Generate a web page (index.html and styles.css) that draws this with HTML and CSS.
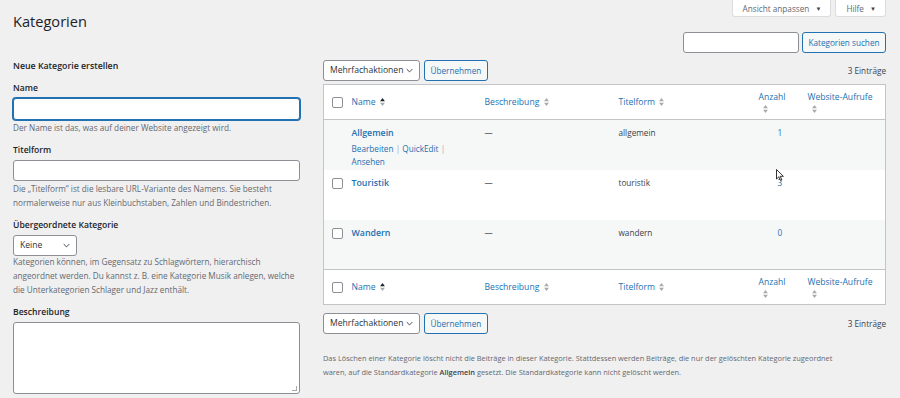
FILE: index.html
```html
<!DOCTYPE html>
<html lang="de">
<head>
    <meta charset="UTF-8">
    <meta name="viewport" content="width=device-width, initial-scale=1.0">
    <title>Kategorien</title>
    <link rel="stylesheet" href="styles.css">
</head>
<body>

    <!-- Top bar -->
    <div class="top">
        <h1>Kategorien</h1>
        <div class="meta-links">
            <button class="meta-btn">Ansicht anpassen <span class="caret">&#9660;</span></button>
            <button class="meta-btn">Hilfe <span class="caret">&#9660;</span></button>
        </div>
    </div>

    <div class="search-row">
        <input type="text" class="search-input">
        <button class="btn">Kategorien suchen</button>
    </div>

    <div class="columns">

        <!-- Left: new category form -->
        <div class="col-left">
            <h2>Neue Kategorie erstellen</h2>

            <div class="field">
                <label>Name</label>
                <input type="text" class="text-input focused">
                <p class="desc">Der Name ist das, was auf deiner Website angezeigt wird.</p>
            </div>

            <div class="field">
                <label>Titelform</label>
                <input type="text" class="text-input">
                <p class="desc">Die „Titelform“ ist die lesbare URL-Variante des Namens. Sie besteht normalerweise nur aus Kleinbuchstaben, Zahlen und Bindestrichen.</p>
            </div>

            <div class="field">
                <label>Übergeordnete Kategorie</label>
                <div class="select small">Keine <svg class="chev" viewBox="0 0 10 6"><path d="M1 1l4 4 4-4" fill="none" stroke="#3c434a" stroke-width="1.4"/></svg></div>
                <p class="desc tight">Kategorien können, im Gegensatz zu Schlagwörtern, hierarchisch angeordnet werden. Du kannst z.&nbsp;B. eine Kategorie Musik anlegen, welche die Unterkategorien Schlager und Jazz enthält.</p>
            </div>

            <div class="field">
                <label>Beschreibung</label>
                <div class="textarea"></div>
            </div>
        </div>

        <!-- Right: list table -->
        <div class="col-right">
            <div class="tablenav">
                <div class="select bulk">Mehrfachaktionen <svg class="chev" viewBox="0 0 10 6"><path d="M1 1l4 4 4-4" fill="none" stroke="#3c434a" stroke-width="1.4"/></svg></div>
                <button class="btn">Übernehmen</button>
                <span class="count">3 Einträge</span>
            </div>

            <table class="list">
                <colgroup>
                    <col class="w-cb">
                    <col class="w-name">
                    <col class="w-desc">
                    <col class="w-slug">
                    <col class="w-num">
                    <col>
                </colgroup>
                <thead>
                    <tr>
                        <th class="cb"><span class="checkbox"></span></th>
                        <th><a>Name <svg class="sort" viewBox="0 0 6 10"><path d="M3 0l3 4H0z" fill="#1d2327"/><path d="M3 10l3-4H0z" fill="#a7aaad"/></svg></a></th>
                        <th><a>Beschreibung <svg class="sort" viewBox="0 0 6 10"><path d="M3 0l3 4H0z" fill="#a7aaad"/><path d="M3 10l3-4H0z" fill="#a7aaad"/></svg></a></th>
                        <th><a>Titelform <svg class="sort" viewBox="0 0 6 10"><path d="M3 0l3 4H0z" fill="#a7aaad"/><path d="M3 10l3-4H0z" fill="#a7aaad"/></svg></a></th>
                        <th class="c-num"><a>Anzahl<br><svg class="sort" viewBox="0 0 6 10"><path d="M3 0l3 4H0z" fill="#a7aaad"/><path d="M3 10l3-4H0z" fill="#a7aaad"/></svg></a></th>
                        <th class="c-views"><a>Website-Aufrufe<br><svg class="sort" viewBox="0 0 6 10"><path d="M3 0l3 4H0z" fill="#a7aaad"/><path d="M3 10l3-4H0z" fill="#a7aaad"/></svg></a></th>
                    </tr>
                </thead>
                <tbody>
                    <tr class="alt">
                        <td class="cb"></td>
                        <td>
                            <a class="row-title">Allgemein</a>
                            <div class="row-actions"><a>Bearbeiten</a> | <a>QuickEdit</a> |<br><a>Ansehen</a></div>
                        </td>
                        <td>—</td>
                        <td>allgemein</td>
                        <td class="c-num"><a>1</a></td>
                        <td></td>
                    </tr>
                    <tr>
                        <td class="cb"><span class="checkbox"></span></td>
                        <td><a class="row-title">Touristik</a></td>
                        <td>—</td>
                        <td>touristik</td>
                        <td class="c-num"><a>3</a></td>
                        <td></td>
                    </tr>
                    <tr class="alt">
                        <td class="cb"><span class="checkbox"></span></td>
                        <td><a class="row-title">Wandern</a></td>
                        <td>—</td>
                        <td>wandern</td>
                        <td class="c-num"><a>0</a></td>
                        <td></td>
                    </tr>
                </tbody>
                <tfoot>
                    <tr>
                        <th class="cb"><span class="checkbox"></span></th>
                        <th><a>Name <svg class="sort" viewBox="0 0 6 10"><path d="M3 0l3 4H0z" fill="#1d2327"/><path d="M3 10l3-4H0z" fill="#a7aaad"/></svg></a></th>
                        <th><a>Beschreibung <svg class="sort" viewBox="0 0 6 10"><path d="M3 0l3 4H0z" fill="#a7aaad"/><path d="M3 10l3-4H0z" fill="#a7aaad"/></svg></a></th>
                        <th><a>Titelform <svg class="sort" viewBox="0 0 6 10"><path d="M3 0l3 4H0z" fill="#a7aaad"/><path d="M3 10l3-4H0z" fill="#a7aaad"/></svg></a></th>
                        <th class="c-num"><a>Anzahl<br><svg class="sort" viewBox="0 0 6 10"><path d="M3 0l3 4H0z" fill="#a7aaad"/><path d="M3 10l3-4H0z" fill="#a7aaad"/></svg></a></th>
                        <th class="c-views"><a>Website-Aufrufe<br><svg class="sort" viewBox="0 0 6 10"><path d="M3 0l3 4H0z" fill="#a7aaad"/><path d="M3 10l3-4H0z" fill="#a7aaad"/></svg></a></th>
                    </tr>
                </tfoot>
            </table>

            <div class="tablenav bottom">
                <div class="select bulk">Mehrfachaktionen <svg class="chev" viewBox="0 0 10 6"><path d="M1 1l4 4 4-4" fill="none" stroke="#3c434a" stroke-width="1.4"/></svg></div>
                <button class="btn">Übernehmen</button>
                <span class="count">3 Einträge</span>
            </div>

            <p class="note">Das Löschen einer Kategorie löscht nicht die Beiträge in dieser Kategorie. Stattdessen werden Beiträge, die nur der gelöschten Kategorie zugeordnet waren, auf die Standardkategorie <strong>Allgemein</strong> gesetzt. Die Standardkategorie kann nicht gelöscht werden.</p>
        </div>
    </div>

    <!-- mouse pointer -->
    <svg class="pointer" viewBox="0 0 8 12"><path d="M0.5 0.5v9.5l2.3-2.2 1.6 3.6 1.4-0.6-1.6-3.5h3.2z" fill="#fff" stroke="#000" stroke-width="0.8"/></svg>

</body>
</html>
```

FILE: styles.css
```css
body {
    margin: 0;
    background-color: #f0f0f1;
    color: #3c434a;
    font-family: "Open Sans", "Noto Sans", sans-serif;
    font-size: 8.2px;
    line-height: 1.6;
    position: relative;
    min-height: 398px;
}

a {
    color: #2271b1;
    text-decoration: none;
}

/* Top */
.top {
    display: flex;
    justify-content: space-between;
    align-items: flex-start;
    padding: 0 14px 0 13px;
    height: 32px;
}

h1 {
    margin: 10px 0 0;
    font-size: 14.6px;
    font-weight: 400;
    color: #1d2327;
    line-height: 22px;
}

.meta-links {
    display: flex;
    gap: 4px;
}

.meta-btn {
    height: 17px;
    background: #fff;
    border: 1px solid #dcdcde;
    border-top: none;
    border-radius: 0 0 3px 3px;
    color: #646970;
    font-family: inherit;
    font-size: 8.2px;
    padding: 0 9px 0 10px;
}

.meta-btn .caret {
    font-size: 6px;
    margin-left: 4px;
    position: relative;
    top: -1px;
    color: #3c434a;
}

.search-row {
    display: flex;
    justify-content: flex-end;
    gap: 3px;
    padding-right: 14px;
    height: 21px;
}

.search-input {
    width: 116px;
    height: 21px;
    box-sizing: border-box;
    border: 1px solid #8c8f94;
    border-radius: 3px;
    background: #fff;
}

.btn {
    height: 21px;
    box-sizing: border-box;
    border: 1px solid #2271b1;
    border-radius: 3px;
    background: #f6f7f7;
    color: #2271b1;
    font-family: inherit;
    font-size: 8.2px;
    padding: 0 5.5px;
}

/* Columns */
.columns {
    display: flex;
    gap: 23px;
    padding: 0 14px 0 13px;
}

.col-left {
    width: 287px;
    flex-shrink: 0;
    padding-top: 6px;
}

.col-right {
    flex: 1;
    padding-top: 7px;
    min-width: 0;
}

h2 {
    margin: 0 0 8px;
    font-size: 8.8px;
    font-weight: 600;
    color: #1d2327;
    line-height: 14px;
}

.field {
    margin-bottom: 8px;
}

.field label {
    display: block;
    font-weight: 600;
    color: #1d2327;
    font-size: 8.6px;
    line-height: 14px;
    margin-bottom: 3px;
}

.text-input {
    display: block;
    width: 100%;
    height: 21px;
    box-sizing: border-box;
    border: 1px solid #8c8f94;
    border-radius: 3px;
    background: #fff;
    margin: 0;
}

.text-input.focused {
    border-color: #2271b1;
    box-shadow: 0 0 0 1px #2271b1;
    height: 22px;
}

.desc {
    margin: 1px 0 0;
    color: #646970;
    line-height: 14px;
}

.desc.tight {
    margin-top: -1px;
}

.select {
    display: inline-flex;
    align-items: center;
    justify-content: space-between;
    box-sizing: border-box;
    height: 21px;
    border: 1px solid #8c8f94;
    border-radius: 3px;
    background: #fff;
    color: #2c3338;
    font-size: 8.6px;
    padding: 0 6px;
}

.select.small {
    width: 64px;
    vertical-align: top;
}

.select.bulk {
    width: 97px;
}

.chev {
    width: 7px;
    height: 5px;
}

.textarea {
    height: 70px;
    border: 1px solid #8c8f94;
    border-radius: 3px;
    background: #fff;
    position: relative;
}

.textarea::after {
    content: "";
    position: absolute;
    right: 2px;
    bottom: 2px;
    width: 4px;
    height: 4px;
    border-right: 1px solid #a7aaad;
    border-bottom: 1px solid #a7aaad;
}

/* Table */
.tablenav {
    display: flex;
    align-items: center;
    gap: 4px;
    height: 21px;
    margin-bottom: 3px;
}

.tablenav.bottom {
    margin-top: 8px;
    margin-bottom: 0;
}

.tablenav .count {
    margin-left: auto;
    color: #3c434a;
}

.list {
    width: 100%;
    border-collapse: collapse;
    border: 1px solid #c3c4c7;
    background: #fff;
    table-layout: fixed;
}

.w-cb { width: 28px; }
.w-name { width: 133px; }
.w-desc { width: 134px; }
.w-slug { width: 134px; }
.w-num { width: 50px; }

.list th,
.list td {
    text-align: left;
    vertical-align: top;
    font-weight: 400;
    padding: 0;
    box-sizing: border-box;
}

.list thead th,
.list tfoot th {
    height: 35px;
    vertical-align: middle;
    line-height: 12px;
}

.list thead tr {
    border-bottom: 1px solid #c3c4c7;
}

.list tfoot tr {
    border-top: 1px solid #c3c4c7;
}

.list th a {
    color: #2271b1;
    font-size: 8.6px;
}

.list td {
    height: 50px;
    padding-top: 6px;
    line-height: 13.5px;
}

.list tr.alt td {
    background: #f6f7f7;
}

.list .cb {
    padding-left: 8px;
}

.list td.cb {
    padding-top: 8px;
}

.list th.c-num {
    padding-left: 6px;
}

.list td.c-num {
    padding-left: 25px;
}

.list th.c-views {
    padding-left: 5px;
}

.list thead .c-num,
.list thead .c-views,
.list tfoot .c-num,
.list tfoot .c-views {
    vertical-align: top;
    padding-top: 6px;
}

.list .c-num .sort,
.list .c-views .sort {
    margin-left: 4px;
}

.checkbox {
    display: block;
    width: 11px;
    height: 11px;
    box-sizing: border-box;
    border: 1px solid #8c8f94;
    border-radius: 2px;
    background: #fff;
}

.sort {
    width: 5px;
    height: 8px;
    margin-left: 2px;
    vertical-align: -1px;
}

.row-title {
    font-weight: 600;
    font-size: 8.8px;
}

.row-actions {
    color: #a7aaad;
    margin-top: 1px;
}

.note {
    margin: 17px 0 0;
    max-width: 510px;
    color: #646970;
    line-height: 14px;
    font-size: 7.4px;
}

.note strong {
    color: #3c434a;
    font-weight: 600;
}

.pointer {
    position: absolute;
    left: 776px;
    top: 169px;
    width: 8px;
    height: 12px;
}
```
